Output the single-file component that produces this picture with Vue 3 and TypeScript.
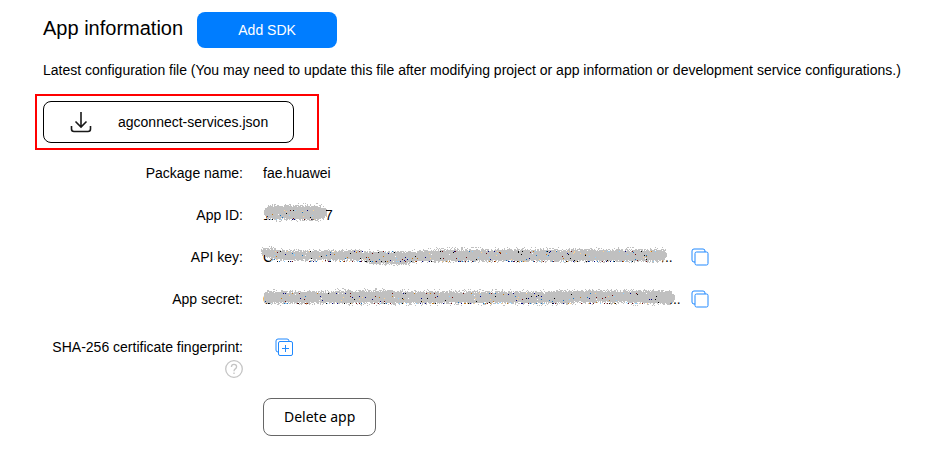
<script setup lang="ts">
type Stop = [x: number, top: number, bottom: number]

interface Mask {
  width: number
  cloud: string
  specks: { fill: string; d: string }[]
}

interface Row {
  label: string
  lead?: string
  tail?: string
  text?: string
  mask?: Mask
  copy?: boolean
}

const SPECK_COLORS = ['#000000', '#000080', '#1874c4', '#c47a18', '#6e0a0a', '#8fd0ff', '#ffd08f', '#ffffff']

/* mulberry32: keeps the spray identical on every render */
function makeRandom(seed: number): () => number {
  let state = seed
  return () => {
    state = (state + 0x6d2b79f5) | 0
    let t = Math.imul(state ^ (state >>> 15), 1 | state)
    t = (t + Math.imul(t ^ (t >>> 7), 61 | t)) ^ t
    return ((t ^ (t >>> 14)) >>> 0) / 4294967296
  }
}

/* Builds a sprayed band of pixels along the given outline; y is measured in a 24px line. */
function sprayMask(width: number, stops: Stop[], seed: number, glyphTop: number, glyphBottom: number): Mask {
  const random = makeRandom(seed)
  const paths: string[] = SPECK_COLORS.map(() => '')
  const last = stops[stops.length - 1][0]
  let cloud = ''
  for (let x = stops[0][0]; x <= last; x++) {
    const i = Math.max(1, stops.findIndex((s) => s[0] >= x))
    const a = stops[i - 1]
    const b = stops[i]
    const t = (x - a[0]) / (b[0] - a[0])
    const top = a[1] + (b[1] - a[1]) * t
    const bottom = a[2] + (b[2] - a[2]) * t
    for (let y = Math.floor(top) - 1; y <= Math.ceil(bottom) + 1; y++) {
      const edge = Math.min(y - top, bottom - y)
      const chance = edge < 0 ? 0.15 : edge < 1 ? 0.5 : edge < 2 ? 0.8 : 1
      if (random() < chance) cloud += `M${x} ${y}h1v1h-1z`
      const inGlyph = y >= glyphTop && y <= glyphBottom
      const rate = y === glyphBottom ? 0.28 : y === glyphTop ? 0.12 : 0.03
      if (inGlyph && x > 8 && x < last - 10 && random() < rate) {
        const k = Math.floor(random() * SPECK_COLORS.length)
        paths[k] += `M${x} ${y}h1v1h-1z`
      }
    }
  }
  return { width, cloud, specks: paths.map((d, k) => ({ fill: SPECK_COLORS[k], d })) }
}

const rows: Row[] = [
  { label: 'Package name:', text: 'fae.huawei' },
  {
    label: 'App ID:',
    lead: '1',
    tail: '7',
    mask: sprayMask(62, [[1, 6, 11], [5, 2, 16], [30, 2, 17], [54, 1, 17], [60, 3, 16], [63, 6, 13]], 11, 7, 16)
  },
  {
    label: 'API key:',
    lead: 'C',
    tail: '...',
    copy: true,
    mask: sprayMask(
      398,
      [[-2, 4, 8], [2, 2, 12], [12, 3, 14], [20, 5, 15], [98, 5, 15], [108, 6, 19], [142, 6, 19], [156, 5, 16], [180, 3, 16], [395, 4, 16], [400, 3, 15], [403, 7, 12]],
      27, 6, 16
    )
  },
  {
    label: 'App secret:',
    lead: 'C',
    tail: '...',
    copy: true,
    mask: sprayMask(
      406,
      [[1, 6, 15], [4, 3, 17], [20, 4, 16], [60, 4, 16], [85, 2, 16], [130, 3, 17], [270, 4, 16], [290, 3, 17], [330, 3, 15], [400, 3, 17], [407, 4, 17], [411, 8, 13]],
      43, 6, 16
    )
  }
]
</script>

<template>
  <main class="page">
    <header class="head">
      <h1 class="title">App information</h1>
      <button type="button" class="primary">Add SDK</button>
    </header>
    <p class="hint">
      Latest configuration file (You may need to update this file after modifying project or app information or development service configurations.)
    </p>
    <div class="callout">
      <button type="button" class="download">
        <svg class="icon-download" viewBox="0 0 22 22" aria-hidden="true">
          <path d="M11 1v14.500M5.500 10.500l5.500 5.500 5.500-5.500M1.500 15v3q0 2.500 2.500 2.500h14q2.500 0 2.500-2.500v-3" />
        </svg>
        <span>agconnect-services.json</span>
      </button>
    </div>
    <dl class="details">
      <div v-for="row in rows" :key="row.label" class="row">
        <dt class="label">{{ row.label }}</dt>
        <dd class="field">
          <span v-if="row.text" class="value">{{ row.text }}</span>
          <span v-if="row.mask" class="value masked">
            <span :style="{ width: row.mask.width + 'px' }">{{ row.lead }}</span>
            <span>{{ row.tail }}</span>
            <svg class="spray" width="420" height="24" viewBox="0 0 420 24" shape-rendering="crispEdges" aria-hidden="true">
              <path :d="row.mask.cloud" fill="#c0c0c0" />
              <path v-for="speck in row.mask.specks" :key="speck.fill" :d="speck.d" :fill="speck.fill" />
            </svg>
          </span>
          <button v-if="row.copy" type="button" class="icon-button" :aria-label="row.label">
            <svg class="icon" viewBox="0 0 18 18" aria-hidden="true">
              <path d="M4 14H3q-2 0-2-2V3q0-2 2-2h9q2 0 2 2v1" />
              <rect x="4" y="4" width="13" height="13" rx="1.500" />
            </svg>
          </button>
        </dd>
      </div>
      <div class="row fingerprint">
        <dt class="label">
          SHA-256 certificate fingerprint:
          <svg class="icon-help" viewBox="0 0 18 18" aria-hidden="true">
            <circle cx="9" cy="9" r="8.300" />
            <path d="M6.400 7q0-2.700 2.600-2.700T11.600 6.800q0 1.200-1.300 2.100T9 11.200M9 12.600v1.400" />
          </svg>
        </dt>
        <dd class="field add">
          <button type="button" class="icon-button" aria-label="SHA-256 certificate fingerprint:">
            <svg class="icon" viewBox="0 0 18 18" aria-hidden="true">
              <path d="M4 14H3q-2 0-2-2V3q0-2 2-2h9q2 0 2 2v1" />
              <rect x="3.500" y="3.500" width="14" height="14" rx="1.500" />
              <path d="M7 10.500h7M10.500 7v7" />
            </svg>
          </button>
        </dd>
      </div>
    </dl>
    <button type="button" class="delete">Delete app</button>
  </main>
</template>

<style>
body {
  margin: 0;
  background: #fff;
}
</style>

<style scoped>
.page {
  padding: 12px 20px 24px 43px;
  color: #000;
  font-family: "Liberation Sans", Arial, sans-serif;
  font-size: 14px;
  line-height: 20px;
}
button {
  margin: 0;
  font: inherit;
  color: inherit;
  cursor: pointer;
}
svg {
  fill: none;
  display: block;
}
.head {
  display: flex;
  align-items: center;
  gap: 14px;
}
.title {
  margin: 0 0 4px;
  font-size: 20px;
  line-height: 24px;
  font-weight: 400;
}
.primary {
  width: 140px;
  height: 36px;
  padding: 0;
  border: 0;
  border-radius: 8px;
  background: #007dff;
  color: #fff;
}
.hint {
  margin: 12px 0 14px;
}
.callout {
  width: fit-content;
  margin-left: -8px;
  padding: 5px 23px 5px 6px;
  border: 2px solid #f00;
}
.download {
  display: flex;
  align-items: center;
  gap: 26px;
  height: 42px;
  padding: 0 25px 0 26px;
  border: 1px solid #000;
  border-radius: 8px;
  background: #fff;
}
.icon-download {
  width: 22px;
  height: 22px;
  stroke: #191919;
  stroke-width: 1.6;
}
.details {
  margin: 2px 0 0;
}
.row {
  display: grid;
  grid-template-columns: 200px 1fr;
  column-gap: 20px;
  align-items: center;
  min-height: 42px;
}
.label {
  text-align: right;
}
.field {
  display: flex;
  align-items: center;
  gap: 10px;
  margin: 0;
}
.value {
  line-height: 24px;
}
.masked {
  position: relative;
  display: flex;
  width: 418px;
}
.spray {
  position: absolute;
  top: 0;
  left: 0;
  overflow: visible;
}
.icon-button {
  padding: 0;
  border: 0;
  background: none;
}
.icon {
  width: 18px;
  height: 18px;
  stroke: #2089ff;
  stroke-width: 1;
}
.fingerprint {
  align-items: start;
  margin-top: 17px;
  min-height: 61px;
}
.add {
  padding: 1px 0 0 12px;
}
.icon-help {
  width: 18px;
  height: 18px;
  margin: 3px 0 0 auto;
  stroke: #c4c4c4;
  stroke-width: 1.3;
}
.delete {
  display: block;
  height: 38px;
  margin-left: 220px;
  padding: 0 20px;
  border: 1px solid #666;
  border-radius: 8px;
  background: #fff;
  font-family: "Noto Sans", "Open Sans", sans-serif;
  font-size: 14px;
}
</style>
